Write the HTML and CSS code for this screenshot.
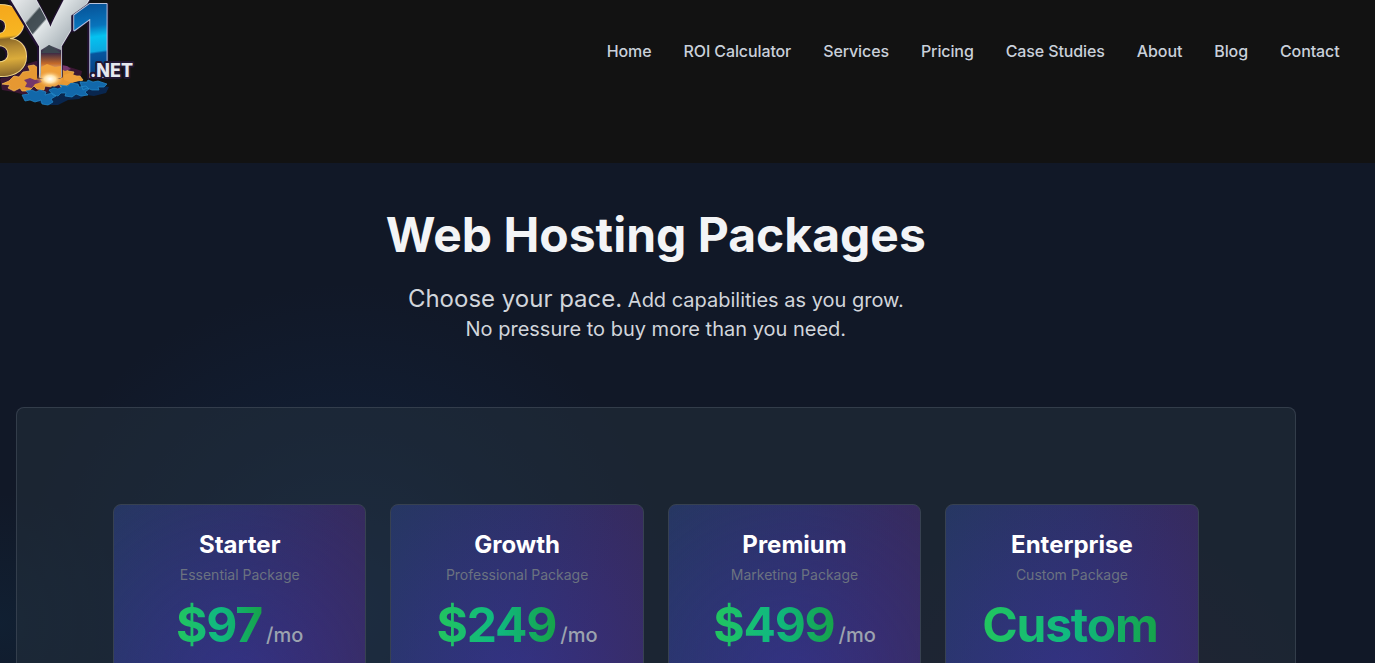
FILE: index.html
```html
<!DOCTYPE html>
<html lang="en">
<head>
<meta charset="utf-8">
<title>Web Hosting Packages</title>
<link rel="stylesheet" href="styles.css">
</head>
<body>
<header class="header">
  <a class="logo" aria-label="BY1.NET">
    <svg width="140" height="110" viewBox="0 0 140 110">
      <defs>
        <linearGradient id="gold" gradientUnits="userSpaceOnUse" x1="50" y1="-73" x2="58" y2="0"><stop offset="0" stop-color="#f5a81c"/><stop offset="0.42" stop-color="#f7b622"/><stop offset="0.46" stop-color="#8d6a28"/><stop offset="0.58" stop-color="#b48a33"/><stop offset="0.75" stop-color="#dbac3b"/><stop offset="1" stop-color="#80602a"/></linearGradient>
        <linearGradient id="silver" gradientUnits="userSpaceOnUse" x1="18" y1="0" x2="68" y2="44"><stop offset="0" stop-color="#e2e5e7"/><stop offset="0.3" stop-color="#c4cacd"/><stop offset="0.33" stop-color="#414c52"/><stop offset="0.49" stop-color="#465158"/><stop offset="0.52" stop-color="#e1e6e8"/><stop offset="1" stop-color="#a6b0b6"/></linearGradient>
        <linearGradient id="stem" x1="0" y1="0" x2="0" y2="1"><stop offset="0" stop-color="#535965"/><stop offset="0.25" stop-color="#392946"/><stop offset="0.6" stop-color="#c46a2a"/><stop offset="1" stop-color="#fff1da"/></linearGradient>
        <linearGradient id="blue" gradientUnits="userSpaceOnUse" x1="86" y1="5" x2="96" y2="77"><stop offset="0" stop-color="#075398"/><stop offset="0.3" stop-color="#0874bc"/><stop offset="0.45" stop-color="#05c2f0"/><stop offset="0.65" stop-color="#0ca9e0"/><stop offset="0.68" stop-color="#06559e"/><stop offset="1" stop-color="#073c7d"/></linearGradient>
        <radialGradient id="glow"><stop offset="0" stop-color="#fff"/><stop offset="0.4" stop-color="#ffe3a8"/><stop offset="1" stop-color="#e88b27" stop-opacity="0"/></radialGradient>
      </defs>
      <path fill="#3b1733" d="M0 79l12-10 24-8 24 3 22 7-2 10-16 8-31 8-19-5-12-2z"/>
      <path fill="#e69832" stroke="#f5c05a" stroke-width=".7" d="M2 84l7-3 5-5 5 1 4-5 7-1-2-5 6-1 4 3 6-2-4-5 8-1 4 4 6-1 1 4 7 0 2 4 6 1-2 4 8 0 3 4-6 3-5-1-3 5-8 0-2-3-6 3-8-1-1 4-7-1-3-3-5 5-7 0-2-3-6 3-6-3 2-3z"/>
      <path fill="#74366b" d="M24 80l6-2 5 2 5-1 2 3-7 2-3 4-7-1 2-4zM59 65l8 1 4 3-6 2-6-3z"/>
      <path fill="#09264e" d="M22 96l13-6 10 5 7-9 11 3 9-7 8-1 29 6-3 6-12 3-8-1-7 4-11 1-10 5-12 0z"/>
      <path fill="#1268aa" stroke="#268dcc" stroke-width=".7" d="M22 95l7-1-3-3 6-1 4 2 4-2 6 2-1 3 7-2 4 3-5 3 2 3-5 3-6-1-1-4-6 2-5-2-5 1zM49 90l5-2 4 1 4-2-2-2 8 1 3-3 7 1 1 3 7-1 3 3-4 3 3 3-7 1-5-2-4 3-7-1 1-3-5 0-3 3-5-1zM80 82l7 0 1-2 5 2 5-1 9 3-3 3-6 0 1 3-7 0-5-2-4 2z"/>
      <g font-family="Inter, sans-serif" font-weight="800" stroke-linejoin="round" paint-order="stroke">
        <g class="outlined" transform="translate(-36 76) scale(.98 .97)">
          <text font-size="100" fill="url(#gold)" stroke="#f0d584" stroke-width="2">B</text>
        </g>
        <text class="outlined" x="4" y="77" font-size="117" textLength="92" lengthAdjust="spacingAndGlyphs" fill="url(#silver)" stroke="#dfe3e6" stroke-width="1.6">Y</text>
        <path fill="url(#stem)" d="M41 50l8-5 12 5v26H41z"/>
        <path fill="#3d464f" d="M41 53l8-8 12 8z"/>
        <text class="outlined" x="70" y="77" font-size="100" textLength="42" lengthAdjust="spacingAndGlyphs" fill="url(#blue)" stroke="#b8c3dc" stroke-width="2">1</text>
      </g>
      <path fill="#efa03a" d="M41 67l6-3 8 3 6-1v11l-8 4-12-3zM64 75l6-2 7 3 4 4-9 3-8-3z"/>
      <ellipse cx="50" cy="79" rx="14" ry="9" fill="url(#glow)"/>
      <text x="90" y="77" font-family="Inter, sans-serif" font-size="18.5" font-weight="800" textLength="43" lengthAdjust="spacingAndGlyphs" fill="#e5e7ef" stroke="#211732" stroke-width="4" stroke-linejoin="round" paint-order="stroke">.NET</text>
    </svg>
  </a>
  <nav class="nav"><a>Home</a><a>ROI Calculator</a><a>Services</a><a>Pricing</a><a>Case Studies</a><a>About</a><a>Blog</a><a>Contact</a></nav>
</header>
<main class="main">
  <section class="hero">
    <h1 class="title">Web Hosting Packages</h1>
    <p class="intro"><span class="lead">Choose your pace.</span> Add capabilities as you grow.<br>No pressure to buy more than you need.</p>
  </section>
  <section class="panel">
    <article class="card"><h2 class="name">Starter</h2><p class="kind">Essential Package</p><div class="price"><span class="amount">$97</span><span class="period">/mo</span></div></article>
    <article class="card"><h2 class="name">Growth</h2><p class="kind">Professional Package</p><div class="price"><span class="amount">$249</span><span class="period">/mo</span></div></article>
    <article class="card"><h2 class="name">Premium</h2><p class="kind">Marketing Package</p><div class="price"><span class="amount">$499</span><span class="period">/mo</span></div></article>
    <article class="card"><h2 class="name">Enterprise</h2><p class="kind">Custom Package</p><div class="price"><span class="amount">Custom</span><span class="period"></span></div></article>
  </section>
</main>
</body>
</html>
```
FILE: styles.css
```css
* { box-sizing: border-box; }
body { margin: 0; height: 663px; overflow: hidden; background: #111827; font-family: Inter, "Liberation Sans", sans-serif; }
h1, h2, p { margin: 0; }
.header { height: 163px; background: #121212; display: flex; justify-content: space-between; align-items: flex-start; padding-right: 35.5px; }
.logo { display: block; height: 110px; }
.logo svg { display: block; }
.outlined { filter: drop-shadow(1.5px 0 0 #211132) drop-shadow(-1.5px 1px 0 #211132); }
.nav { display: flex; gap: 32px; padding-top: 39px; font-size: 16px; line-height: 24px; font-weight: 500; letter-spacing: -.11px; color: #c9d0da; white-space: nowrap; }
.main {
  height: 500px;
  overflow: hidden;
  padding: 44px 79.4px 0 16px;
  background:
    radial-gradient(circle at 345px 450px, rgba(24, 80, 145, .27) 0, rgba(18, 58, 110, .15) 180px, transparent 330px),
    radial-gradient(circle at 0 460px, rgba(14, 65, 100, .18), transparent 130px),
    radial-gradient(circle at 1080px 600px, rgba(80, 20, 60, .24), transparent 250px),
    #111827;
}
.hero { height: 200px; text-align: center; }
.title { font-size: 48px; line-height: 56px; font-weight: 700; color: #f3f4f6; }
.intro { margin-top: 21px; font-size: 20px; line-height: 29px; color: #d1d5db; }
.lead { font-size: 24px; }
.panel { height: 420px; display: grid; grid-template-columns: repeat(4, 1fr); gap: 24px; padding: 96px; border: 1px solid rgba(75, 85, 99, .5); border-radius: 8px; background: rgba(38, 50, 61, .5); }
.card { height: 300px; padding: 24px; border: 1px solid #374151; border-radius: 8px; text-align: center; background: radial-gradient(circle at 50% 60%, rgba(58, 54, 175, .42), transparent 220px), linear-gradient(100deg, #263762 0%, #2d3064 45%, #352b5f 75%, #382b58 100%); }
.name { font-size: 24px; line-height: 32px; font-weight: 700; color: #fff; }
.kind { margin-top: 4px; font-size: 14px; line-height: 20px; color: #6b7280; }
.price { margin-top: 16px; display: flex; justify-content: center; align-items: baseline; gap: 4px; line-height: 48px; }
.amount { font-size: 48px; font-weight: 700; letter-spacing: -1.2px; background: linear-gradient(to right, #22c55e, #10b981, #16a34a); background-clip: text; -webkit-background-clip: text; color: transparent; }
.period { font-size: 20px; font-weight: 500; color: #9ca3af; }
```
